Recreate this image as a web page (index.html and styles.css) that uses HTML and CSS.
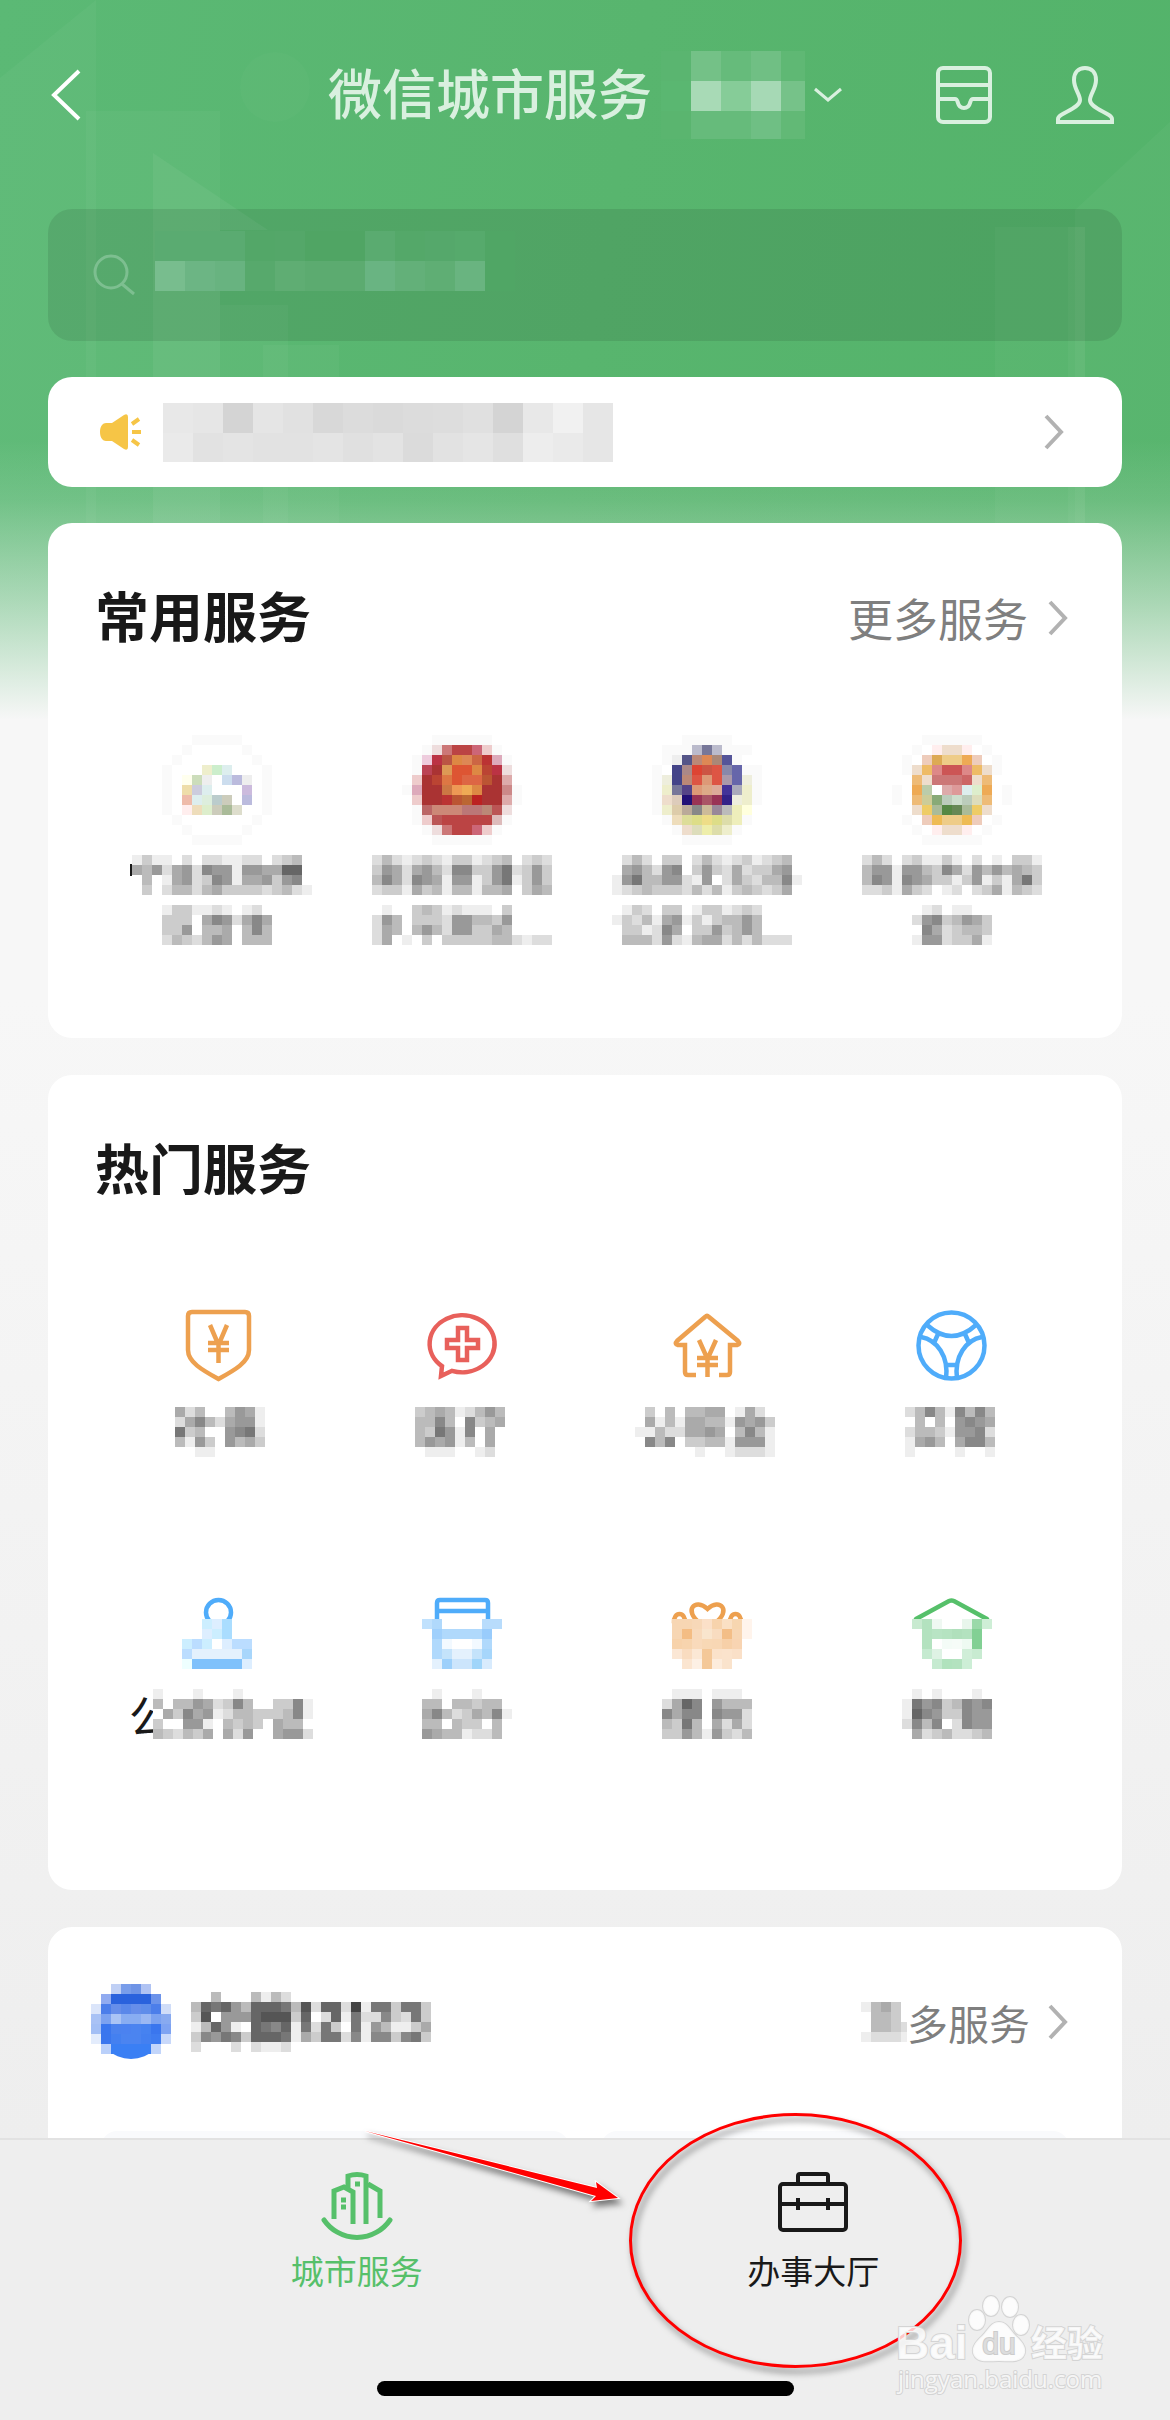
FILE: index.html
```html
<!DOCTYPE html>
<html lang="zh-CN">

<head>
    <meta charset="UTF-8">
    <meta name="viewport" content="width=device-width, initial-scale=1.0">
    <title>微信城市服务</title>
    <link rel="stylesheet" href="styles.css">
</head>

<body>
    <svg class="backdrop" viewBox="0 0 1170 720" preserveAspectRatio="none" fill="#fff">
        <path d="M0 78L96 0V720H0z" opacity=".03" />
        <path d="M86 111H220V720H86z" opacity=".03" />
        <path d="M153 153L268 230H220V720H153z" opacity=".05" />
        <path d="M220 305H288V720H220z" opacity=".03" />
        <path d="M263 345H339V720H263z" opacity=".03" />
        <ellipse cx="275" cy="87" rx="35" ry="35" opacity=".02" />
        <path d="M1170 122L1075 210V720H1170z" opacity=".03" />
        <path d="M995 227H1085V720H995z" opacity=".03" />
        <path d="M1068 227H1085V720H1068z" opacity=".03" />
    </svg>
    <div class="fade"></div>

    <main>
        <header>
            <button type="button" class="icon-btn back" aria-label="返回">
                <svg width="34" height="56" fill="none" stroke="#fff" stroke-width="4"><path d="M31 4L6 28l25 24" /></svg>
            </button>
            <div class="city">
                <h1>微信城市服务</h1>
                <svg width="144" height="88"><g class="mosaic" data-size="30" data-cells="5ab570 74c187 66bb7b 70bf84 5fb874/5ab771 a8dab6 86cc98 a6d9b5 76c289/5ab56f 66bb7b 66bb7b 6fbf84 62b976"></g></svg>
                <svg width="28" height="16" fill="none" stroke="#d9f0df" stroke-width="3"><path d="M1 2l13 11L27 2" /></svg>
            </div>
            <div class="actions">
                <button type="button" class="icon-btn" aria-label="消息">
                    <svg width="56" height="58" fill="none" stroke="#d9f0df" stroke-width="4">
                        <rect x="2" y="2" width="52" height="54" rx="5" />
                        <path d="M2 19h52M2 33h17c2 0 2 1 3 4 1 4 4 5 6 5s5-1 6-5c1-3 1-4 3-4h17" />
                    </svg>
                </button>
                <button type="button" class="icon-btn" aria-label="我的">
                    <svg width="58" height="58" fill="none" stroke="#d9f0df" stroke-width="4">
                        <path d="M29 2c-7 0-11 5-11 12 0 9 6 14 6 20 0 9-22 13-22 19v3h54v-3c0-6-22-10-22-19 0-6 6-11 6-20 0-7-4-12-11-12z" />
                    </svg>
                </button>
            </div>
        </header>

        <button type="button" class="search" aria-label="搜索">
            <svg width="42" height="42" fill="none" stroke="#7dbf90" stroke-width="3"><circle cx="18" cy="18" r="16" /><path d="M29 30l12 10" /></svg>
            <svg width="360" height="88"><g class="mosaic" data-size="30" data-cells="5aab71 5aab71 5aab71 53a768 54a769 50a564 50a564 5aab70 54a869 55a86b 56aa6c 50a665/78bd8e 6cb584 68b380 57a96c 5fad73 5cab70 5cab70 69b482 63b079 5fae74 69b480 50a665"></g></svg>
        </button>

        <a class="notice" href="#notice">
            <svg width="44" height="36" fill="#f6c546">
                <path d="M1 18c0-6 3-9 6-9h6L25 1q4-2 4 2v30q0 4-4 2L13 27H7c-3 0-6-3-6-9z" />
                <path d="M33 10l7-5M33 18h9M33 26l7 5" stroke="#f6c546" stroke-width="4" />
            </svg>
            <svg width="450" height="59"><g class="mosaic" data-size="30" data-cells="e8 e6 d4 e5 e1 d8 dc da dc dd e0 d4 e8 f1 e6/ea e2 e4 e2 e2 e4 e0 e3 db e2 e5 df ed ea e6"></g></svg>
            <svg class="arrow" width="20" height="36"><path d="M2 2l15 16L2 34" /></svg>
        </a>

        <section class="card common">
            <div class="card-head">
                <h2>常用服务</h2>
                <a class="more" href="#more">更多服务<svg class="arrow" width="20" height="36"><path d="M2 2l15 16L2 34" /></svg></a>
            </div>
            <div class="tiles">
                <button type="button" class="tile">
                    <svg width="245" height="110"><g class="mosaic" data-x="67" data-cells="- - - o o o o o - - -/- - o - - - - - o - -/- o - - - - - - - o -/o - - - eec cec dee - - - o/o - ffe cdb eee - cde bbd eee - o/o - eda ccd dee - - - cbd - o/o - eba dee ded bcc ccb - bbd - o/o - fee edb dec ccb ab9 ddc - - o/- o - - - - - - - o -/- - o - - - - - o - -/- - - o o o o o - - -"></g></svg>
                    <svg width="245" height="90">
                        <path d="M36 9v12" stroke="#191919" stroke-width="2" />
                        <g class="mosaic" data-x="37" data-cells="eceefdfddeeddfdcb./ab9da9d899e99aa66f/fbfea9dc89eaa9c98./fc.dbbdbaccccdcbde"></g>
                        <g class="mosaic" data-x="67" data-y="50" data-cells="ecceedefedf/ccc.a89da8a/cc9fbba.b8b/dbcdb9afbbb"></g>
                    </svg>
                </button>
                <button type="button" class="tile">
                    <svg width="245" height="110"><g class="mosaic" data-x="62" data-cells="- - - o o o o o o - - -/- - o edd c77 b44 b44 c67 ecc o - -/- o ecd b34 b54 d84 d85 c64 b33 dab o -/- o b45 a33 d95 d53 d53 d84 b43 b34 edd -/- ecc a33 b43 d74 d53 d64 d64 b53 a33 daa -/o dab a33 a33 c74 e95 ea5 d84 a33 a33 c88 o/- ecc a33 a33 b33 b53 b63 b22 a33 a33 daa o/- o b66 c87 c87 c87 b77 b77 b87 b55 edd -/- o ecc b55 b44 b44 b44 b44 b44 dbb o -/- - o edd c77 b44 b44 c67 ecc o - -/- - - o o o o o o - - -"></g></svg>
                    <svg width="245" height="90">
                        <g class="mosaic" data-x="32" data-cells="dbdedcdeccedcbfdcd/c9ada9bd88cc97dc9c/b8ad89ae99ec97ec9c/dcceacbebbebbafcab"></g>
                        <g class="mosaic" data-x="32" data-y="50" data-cells=".e..cbcedeee.cf.../d9bfcccd99bbc9f.../dabfb9bd99ccabf.../dafe.c.cccccbbdedd"></g>
                    </svg>
                </button>
                <button type="button" class="tile">
                    <svg width="245" height="110"><g class="mosaic" data-x="67" data-cells="- - - o o o o o - - -/- o o o bbc 779 bbc o o o -/- o eee 558 b87 d85 a87 559 o - -/o - 448 a88 d43 c54 d54 88a 66a o o/o eed 448 b87 d54 d97 d54 a9a 66a eed o/o eec 779 548 d97 da8 da9 439 aab eec o/o edc dcb 217 935 a56 935 328 eed eec o/o eec dca ba9 888 cb9 989 bbb eeb ffd -/- o edb dd9 dd8 ed8 dd8 dda eeb o -/- - o edc ddb eea dda eec o - -/- - - o o o o o - - -"></g></svg>
                    <svg width="245" height="90">
                        <g class="mosaic" data-x="27" data-cells="fdbdfcc.dbdedcedcbf/fa9bd98.c9cdadcca9f/e97bb99de9fdacdbb8e/edcbcccdbdbecbcdcaf"></g>
                        <g class="mosaic" data-x="27" data-y="50" data-cells=".ecdfcc.eccedcd..../ecdbea9ececbb9b..../.cced8afcc9cb9b..../.bbbd9debaadbdbddd."></g>
                    </svg>
                </button>
                <button type="button" class="tile">
                    <svg width="245" height="110"><g class="mosaic" data-x="62" data-cells="- - - o o o o o o - - -/- - o - fee edc edc fee - o -/- o - ecb da5 ec8 ec8 ea5 ecb - o -/- o edc eb6 d88 c55 c55 d88 eb6 edc o -/- - eb7 edc c77 c77 c77 c66 edc eb7 - -/o - ea5 bca fff daa d99 dee dec ea5 - o/o - eb7 cc9 8a7 bcb cdc bcb ddb eb7 - o/- - edc ec6 ab9 584 685 ab9 ec6 edc - -/- o - ecb eb5 ec8 ec8 eb5 ecb - o -/- - o - fee edc edc fee - o - -/- - - o o o o o o - - -"></g></svg>
                    <svg width="245" height="90">
                        <g class="mosaic" data-x="32" data-cells="dbdfdceecefdfe.cce/b99e99bc8ad9b9babc/b89e89accec9ecea7c/ddceacdfedfdcaebcd"></g>
                        <g class="mosaic" data-x="82" data-y="50" data-cells="fedfeeff/d98cb9ac/.8adcbbc/e99dccae"></g>
                    </svg>
                </button>
            </div>
        </section>

        <section class="card hot">
            <div class="card-head">
                <h2>热门服务</h2>
            </div>
            <div class="tiles">
                <button type="button" class="tile">
                    <svg class="line orange" width="245" height="80">
                        <path d="M97 7h53q4 0 4 4v34c0 12-14 20-30.500 29C107 65 93 57 93 45V11q0-4 4-4z" />
                        <path d="M115 20l8.500 20 8.500-20M113 38h21M113 45h21M123.500 38v20" />
                    </svg>
                    <svg width="245" height="56"><g class="mosaic" data-x="80" data-y="6" data-cells="adb..b9ae/da8bda99e/7cb.f987d/be9cf9bac/ffee.f.f."></g></svg>
                </button>
                <button type="button" class="tile">
                    <svg class="line red" width="245" height="80">
                        <path d="M112 65.800A32.500 28.500 0 1 0 102 61.100L101 71z" />
                        <path d="M118 23h9v12h11v8h-11v12h-9V43h-11v-8h11z" />
                    </svg>
                    <svg width="245" height="56"><g class="mosaic" data-x="75" data-y="6" data-cells="cbabedb9b/bb8b.8cba/bc79e8.a./b9a9eb.a./feeeffed."></g></svg>
                </button>
                <button type="button" class="tile">
                    <svg class="line orange" width="245" height="80">
                        <path d="M111 70h-8q-3 0-3-3V40h-7q-4-1-1-4l28-24q2-2 4 0l29 24q3 3-1 4h-7v27q0 3-3 3h-8" />
                        <path d="M114 35l8.500 19 8.500-19M112 53h21M112 60h21M122.500 53v19" />
                    </svg>
                    <svg width="245" height="56"><g class="mosaic" data-x="50" data-y="6" data-cells=".cfb.bbaa.ead./.aebeaabbe9a9c/eebddaa9afb8be/.8b8fccbbe999e/.f..ffe.feddde"></g></svg>
                </button>
                <button type="button" class="tile">
                    <svg class="line blue" width="245" height="80">
                        <circle cx="121.500" cy="40.500" r="33" />
                        <path d="M97 20q24.500 22 49 0M91 32c16 3 28 19 25 42M152 32c-16 3-28 19-25 42M108 29l-4 9M135 29l4 9M116 60h11" />
                    </svg>
                    <svg width="245" height="56"><g class="mosaic" data-x="75" data-y="6" data-cells="db8be8b8b/fb.bf989a/dbbce998d/ea9bfa88b/e..ffeffe"></g></svg>
                </button>
                <button type="button" class="tile">
                    <svg class="line blue" width="245" height="80">
                        <circle cx="123.500" cy="19.500" r="12.500" />
                        <g class="mosaic" data-x="87" data-y="26" data-cells="- - cef def adf - -/- - def cef adf - -/cef bdf cef fff def bdf bdf/bdf e4f1fd e4f1fd e4f1fd e4f1fd e4f1fd a8d6fb/eff 7fc1fb 7fc1fb 7fc1fb 7fc1fb 7fc1fb def"></g>
                    </svg>
                    <svg width="245" height="56">
                        <text class="label" x="34" y="45">公</text>
                        <g class="mosaic" data-x="58" data-cells="efffefffefffffff/bfbb9adc8bffcc8e/fac8a9edbbcccb8e/cff99efbcbcfabbf/bcdbcafad9ffa99d"></g>
                    </svg>
                </button>
                <button type="button" class="tile">
                    <svg class="line blue" width="245" height="80">
                        <path d="M97 30V10q0-3 3-3h45q3 0 3 3v20M97 18h51" />
                        <g class="mosaic" data-x="82" data-y="26" data-cells="c0e1fd b0d9fc fff fff fff fff b8dcfc b8dcfc/- a0d0fc b0d9fc b0d9fc b0d9fc b0d9fc 99ccfc -/- b0d9fc f2f9ff fff fff f2f9ff b0d9fc -/- b0d9fc c4e3fb e4f1fd e4f1fd c4e3fb a6d6fb -/- e4f1fd 9dd0fb cce5fc cce5fc a0d5fa d8ebfd -"></g>
                    </svg>
                    <svg width="245" height="56"><g class="mosaic" data-x="72" data-cells="..e...e.../.bbfbbcbbf/.a8bdcab8e/fbb.bcc.b./.9abbeddb."></g></svg>
                </button>
                <button type="button" class="tile">
                    <svg class="line orange" width="245" height="80">
                        <path d="M115 30C98 18 110 4 122.500 16C135 4 147 18 130 30" />
                        <path d="M89 30c-1-12 12-12 11 0M145 30c-1-12 12-12 11 0" />
                        <g class="mosaic" data-x="87" data-y="26" data-cells="f7d6b3 f7d6b3 f7d8b8 fbe0c8 f7d3ac fae0c4 f7d6b0 fff4ec/f7d6b3 f4bd84 f8dabc f9e5cd f8dcc0 f3be87 f7d6b3 fff4ec/f7d2aa f7d4ae f9dabb f8d8b5 f8d7b4 f7d0a8 f8d4b2 -/fbe7d5 f9dcc0 fbe8d5 f4c898 fbe2ca fbe3cc fae0c8 -/- fbe5d0 fdf0e4 f4c898 fdecdc fae3cc - -"></g>
                    </svg>
                    <svg width="245" height="56"><g class="mosaic" data-x="77" data-cells=".eeefeeef/da68f9bbb/8a88f899d/bc7b.adad/cc9be9cdb"></g></svg>
                </button>
                <button type="button" class="tile">
                    <svg class="line green" width="245" height="80">
                        <path d="M86 26l33-18q2.500-1 5 0l33 18" stroke-linecap="round" />
                        <g class="mosaic" data-x="82" data-y="26" data-cells="c8ead0 b3e2bf eff8f2 fff fff e8f6ec 9ad9a9 ceeed6/- b3e2bf b8e4c4 b5e3c1 b0e0bc b3e2bf 82d094 -/- b3e2bf - f4fcf7 f6fcf8 eefaf2 82d094 -/- c5ead0 def2e4 - - d0eed8 c8ebd1 -/- - c5ead0 b0e2bd b3e2bf cdeed6 - -"></g>
                    </svg>
                    <svg width="245" height="56"><g class="mosaic" data-x="72" data-cells=".e.e..fe../e798cb898f/e689cc899./d8b8fd899./.adcbddcb."></g></svg>
                </button>
            </div>
        </section>

        <section class="card traffic">
            <div class="card-head">
                <div class="brand">
                    <svg width="80" height="76">
                        <circle cx="40" cy="40" r="35" fill="#3a7ff4" />
                        <g class="mosaic" data-cells="fff fff c0d0f5 799dea 6f94e6 b0c3f3 fff fff/fff 91abf0 2a62dd 2a62dd 2a62dd 2a62dd 6c93ea fff/dbe5fa 4c7eea 668eea 5a88ea 668eea 5f8dea 4c7eea d0ddf8/a9c2f5 7ca2f0 aac4f5 88adf2 88adf2 9ab8f3 7ca2f0 88aaf0/a3bff5 3a76ee 4b82ee 4b82f0 4b84f0 4682f0 3a76ee 7ea3f2/e3ecfc 3a76ee 4480f0 4b84f0 4b84f0 4480f0 3f7cf0 c8d8fa/fff bad0fa 3a7ff4 3a7ff4 3a7ff4 3a7ff4 c2d5fa fff"></g>
                    </svg>
                    <svg width="240" height="60"><g class="mosaic" data-cells="..b..fbebd............../b6769b6667b5d66d4e77c77c/c5f9996555c6fd6e7dd8cd7c/eb69ef6786e7d7cf7e9beeca/c8978c6667eac77d8e88c87c/dff.d.deed.............."></g></svg>
                </div>
                <a class="more small" href="#traffic"><svg width="46" height="40"><g class="mosaic" data-cells="ebacf/fbbcf/fbbcd/eddde"></g></svg>多服务<svg class="arrow" width="20" height="36"><path d="M2 2l15 16L2 34" /></svg></a>
            </div>
            <div class="panels">
                <div class="panel"></div>
                <div class="panel"></div>
            </div>
        </section>
    </main>

    <footer>
        <nav>
            <a class="tab active" href="#city">
                <svg width="72" height="72" fill="none" stroke="#56c06a" stroke-width="5">
                    <path d="M3 50A40 40 0 0 0 69 50" stroke-linecap="round" />
                    <path d="M13 49V21l10-4 9 5v32M27 18V6q9-3 18 0v48M47 14l12 7v27" />
                    <path d="M34 14h5M20 30h5M20 37h5" />
                </svg>
                城市服务
            </a>
            <a class="tab" href="#hall">
                <svg width="72" height="72" fill="none" stroke="#191919" stroke-width="4">
                    <rect x="3" y="14" width="66" height="46" rx="3" />
                    <path d="M21 13V6q0-2 2-2h26q2 0 2 2v7M3 34h66M21 28v12M51 28v12" />
                </svg>
                办事大厅
            </a>
        </nav>
        <div class="home-bar"></div>

        <!-- marker ellipse, pointer and watermark lie over the bar -->
        <svg class="marks" width="1170" height="282">
            <g class="marker">
                <path d="M365 -7L597 50 596 44 618 60 591 63 596 58z" fill="red" stroke="#fff" stroke-width="2" paint-order="stroke" />
                <ellipse cx="795.500" cy="102.500" rx="165" ry="126" fill="none" stroke="red" stroke-width="3" />
            </g>
            <g class="watermark">
                <text class="bai" x="896" y="221">Bai</text>
                <ellipse cx="977" cy="182" rx="8" ry="10" />
                <ellipse cx="991" cy="168" rx="8" ry="10" />
                <ellipse cx="1010" cy="169" rx="8" ry="10" />
                <ellipse cx="1021" cy="187" rx="8" ry="10" />
                <path d="M999 184c8 0 11 8 17 14 8 7 12 14 7 21-5 6-14 4-24 4s-19 2-24-4c-5-7-1-14 7-21 6-6 9-14 17-14z" />
                <text class="du" x="999" y="216">du</text>
                <text class="jy" x="1031" y="219">经验</text>
                <text class="url" x="898" y="250">jingyan.baidu.com</text>
            </g>
        </svg>
    </footer>

    <script src="script.js"></script>
</body>

</html>
```
FILE: styles.css
```css
* {
    box-sizing: border-box;
}

body {
    position: relative;
    display: flex;
    flex-direction: column;
    height: 100vh;
    margin: 0;
    overflow: hidden;
    color: #191919;
    font-family: "Noto Sans CJK SC", sans-serif;
    background: linear-gradient(100deg, #5bb975, #58b56e 50%, #53b36a) top / 100% 720px no-repeat,
        linear-gradient(#f7f7f7 1000px, #eeeeee 2138px);
}

button {
    padding: 0;
    border: 0;
    background: none;
    font-family: inherit;
}

a {
    color: inherit;
    text-decoration: none;
}

svg {
    display: block;
    flex: none;
}

h1,
h2 {
    margin: 0 0 6px;
    font-size: 54px;
    font-weight: 500;
    line-height: 70px;
}

h2 {
    font-weight: 700;
}

.backdrop,
.fade {
    position: absolute;
    top: 0;
    left: 0;
    width: 100%;
    height: 720px;
}

.fade {
    background: linear-gradient(rgba(247, 247, 247, 0) 440px, rgba(247, 247, 247, .12) 500px, rgba(247, 247, 247, .5) 600px, #f7f7f7 720px);
}

main {
    position: relative;
    flex: 1;
    min-height: 0;
    overflow: hidden;
    padding: 0 48px;
}

header {
    display: grid;
    grid-template-columns: 1fr auto 1fr;
    align-items: center;
    height: 190px;
    margin-bottom: 19px;
}

.city {
    display: flex;
    align-items: center;
    gap: 9px;
    color: #d9f0df;
}

.actions {
    display: flex;
    justify-content: flex-end;
    gap: 64px;
    padding-right: 8px;
}

.search {
    display: flex;
    align-items: center;
    gap: 20px;
    width: 100%;
    height: 132px;
    margin-bottom: 36px;
    padding: 0 45px;
    border-radius: 24px;
    background: rgba(0, 0, 0, .09);
}

.notice {
    display: flex;
    align-items: center;
    gap: 20px;
    height: 110px;
    margin-bottom: 36px;
    padding: 0 58px 0 51px;
    border-radius: 24px;
    background: #fff;
}

.arrow {
    fill: none;
    stroke: #b2b2b2;
    stroke-width: 4;
}

.notice .arrow {
    margin-left: auto;
}

.card {
    margin-bottom: 37px;
    padding: 57px 47px 0;
    border-radius: 24px;
    background: #fff;
}

.card-head {
    display: flex;
    justify-content: space-between;
    align-items: center;
    height: 76px;
}

.more {
    display: flex;
    align-items: center;
    gap: 20px;
    padding-right: 7px;
    color: #7f7f7f;
    font-size: 45px;
    line-height: 76px;
}

.more.small {
    gap: 0;
    font-size: 41px;
}

.more.small .arrow {
    margin-left: 18px;
}

.tiles {
    display: grid;
    grid-template-columns: repeat(4, 1fr);
    row-gap: 136px;
}

.tile {
    display: flex;
    flex-direction: column;
    align-items: center;
}

.common {
    padding-bottom: 93px;
}

.common .tiles {
    margin-top: 79px;
}

.common .tile {
    gap: 10px;
}

.hot {
    padding-bottom: 145px;
}

.hot .tiles {
    margin-top: 97px;
}

.hot .tile {
    gap: 16px;
}

.label {
    font-size: 45px;
    fill: #191919;
}

.line {
    fill: none;
    stroke-width: 4.5;
}

.orange {
    stroke: #eda04f;
}

.red {
    stroke: #e8605b;
}

.blue {
    stroke: #4facfa;
}

.green {
    stroke: #56c06a;
}

.mosaic {
    stroke: none;
    shape-rendering: crispEdges;
}

.traffic {
    margin-bottom: 0;
}

.brand {
    display: flex;
    align-items: center;
    gap: 20px;
    margin-left: -4px;
}

.panels {
    display: grid;
    grid-template-columns: 1fr 1fr;
    gap: 32px;
    padding: 0 6px;
    margin-top: 71px;
}

.panel {
    height: 160px;
    border-radius: 16px;
    background: #f9fafc;
}

footer {
    position: relative;
    display: flex;
    flex-direction: column;
    justify-content: space-between;
    align-items: center;
    height: 282px;
    padding: 30px 0 24px;
    border-top: 2px solid #e2e2e2;
    background: #eee;
}

nav {
    display: flex;
    align-self: stretch;
    padding: 0 11%;
}

.tab {
    display: flex;
    flex: 1;
    flex-direction: column;
    align-items: center;
    gap: 4px;
    font-size: 33px;
    line-height: 48px;
}

.tab.active {
    color: #56c06a;
}

.home-bar {
    width: 417px;
    height: 15px;
    border-radius: 8px;
    background: #000;
}

.marks {
    position: absolute;
    top: -2px;
    left: 0;
    overflow: visible;
    pointer-events: none;
}

.marker {
    filter: drop-shadow(3px 5px 3px rgba(0, 0, 0, .5));
}

.watermark {
    fill: rgba(255, 255, 255, .8);
    stroke: #d4d4d4;
    stroke-width: 2;
    paint-order: stroke;
}

.bai {
    font: bold 46px "Liberation Sans", sans-serif;
}

.du {
    font: 30px "Liberation Sans", sans-serif;
    text-anchor: middle;
    fill: #ddd;
    stroke: #ccc;
}

.jy {
    font-size: 36px;
    font-weight: 700;
}

.url {
    font: 24px "Open Sans", sans-serif;
}
```
FILE: script.js
```js
// Fills every g.mosaic with square blocks.
// Rows are split by "/". A row is either one hex grey per block,
// or colours split by spaces ("-" and "." leave a block out, "o" is the pale ring).
function cellColor(cell) {
    if (cell === "o") return "#fafafa";
    if (cell.length < 3) return "#" + cell.repeat(3);
    return "#" + cell;
}

document.querySelectorAll(".mosaic").forEach(function (group) {
    const data = group.dataset;
    const size = Number(data.size || 10);
    const left = Number(data.x || 0);
    const top = Number(data.y || 0);
    let rects = "";

    data.cells.split("/").forEach(function (row, y) {
        const cells = row.includes(" ") ? row.split(" ") : row.split("");
        cells.forEach(function (cell, x) {
            if (cell === "-" || cell === ".") return;
            rects += `<rect x="${left + x * size}" y="${top + y * size}" width="${size}" height="${size}" fill="${cellColor(cell)}"/>`;
        });
    });
    group.innerHTML = rects;
});
```
